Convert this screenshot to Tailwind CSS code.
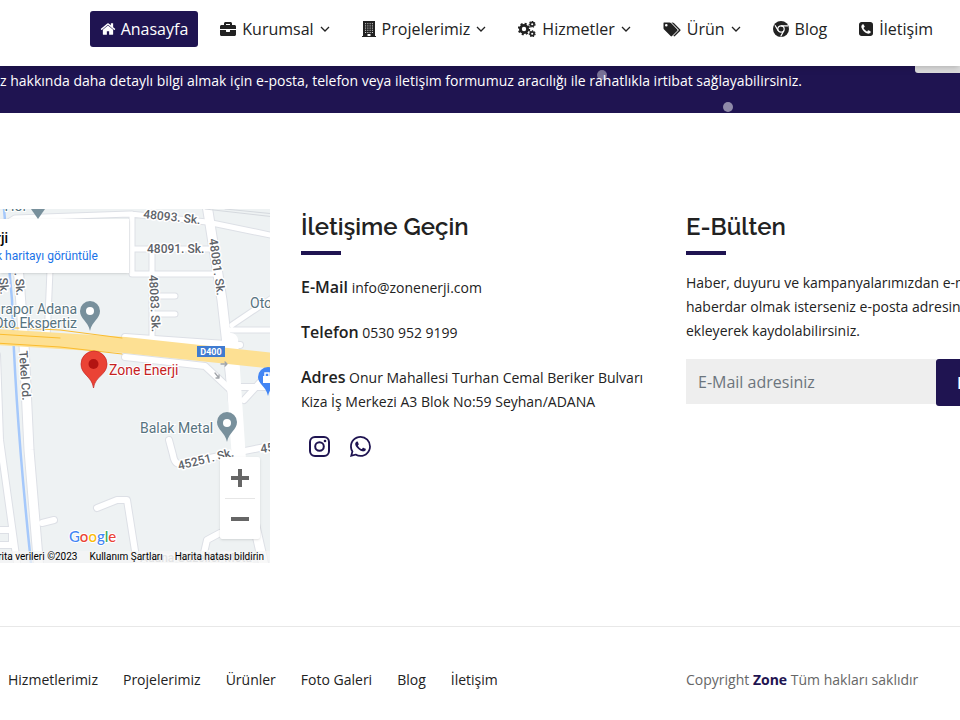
<!DOCTYPE html>
<html lang="tr">
<head>
    <meta charset="UTF-8">
    <meta name="viewport" content="width=device-width, initial-scale=1.0">
    <title>İletişim - Zone Enerji</title>
    <script src="https://cdn.jsdelivr.net/npm/@tailwindcss/browser@4"></script>
</head>
<body class="overflow-x-hidden bg-white font-['Open_Sans',sans-serif] text-[14px] leading-6 text-[#222]">

    <!-- Header -->
    <header class="relative z-20 flex h-[66px] justify-end bg-white pr-[17px] pt-[11px] shadow-md">
        <nav class="flex items-start gap-3 whitespace-nowrap text-[16px]">
            <a href="#" class="flex h-9 items-center gap-[5px] rounded-[3px] bg-[#1f1451] px-[10px] text-white">
                <svg class="h-4 w-4" viewBox="0 0 1792 1792" fill="currentColor"><path d="M1472 992v480q0 26-19 45t-45 19h-384v-384h-256v384h-384q-26 0-45-19t-19-45v-480q0-1 .5-3t.5-3l575-474 575 474q1 2 1 6zm223-69l-62 74q-8 9-21 11h-3q-13 0-21-7l-692-577-692 577q-12 8-24 7-13-2-21-11l-62-74q-8-10-7-23.5t11-21.5l719-599q32-26 76-26t76 26l244 204v-195q0-14 9-23t23-9h192q14 0 23 9t9 23v408l219 182q10 8 11 21.5t-7 23.5z"/></svg>
                Anasayfa
            </a>
            <a href="#" class="flex h-9 items-center gap-[6px] px-[10px]">
                <svg class="h-4 w-4" viewBox="0 0 512 512" fill="currentColor"><path d="M320 336c0 8.84-7.16 16-16 16h-96c-8.84 0-16-7.16-16-16v-48H0v144c0 25.6 22.4 48 48 48h416c25.6 0 48-22.4 48-48V288H320v48zm144-208h-80V80c0-25.6-22.4-48-48-48H176c-25.6 0-48 22.4-48 48v48H48c-25.6 0-48 22.4-48 48v80h512v-80c0-25.6-22.4-48-48-48zm-144 0H192V96h128v32z"/></svg>
                Kurumsal
                <svg class="h-[10px] w-[10px]" viewBox="0 0 10 10" fill="none" stroke="currentColor" stroke-width="1.3"><path d="M1 3l4 4 4-4"/></svg>
            </a>
            <a href="#" class="flex h-9 items-center gap-[6px] px-[10px]">
                <svg class="h-4 w-[14px]" viewBox="0 0 14 16"><path d="M1 0h12v15h1v1H0v-1h1z" fill="currentColor"/><path d="M3 2.7h8M3 4.9h8M3 7.1h8M3 9.3h8M3 11.500h8" stroke="#fff" stroke-width=".8" stroke-dasharray="1.1 1.2"/><path d="M5.500 13h3v2h-3z" fill="#fff"/></svg>
                Projelerimiz
                <svg class="h-[10px] w-[10px]" viewBox="0 0 10 10" fill="none" stroke="currentColor" stroke-width="1.3"><path d="M1 3l4 4 4-4"/></svg>
            </a>
            <a href="#" class="flex h-9 items-center gap-[6px] px-[10px]">
                <svg class="h-4 w-[18px]" viewBox="0 0 18 16" fill="none" stroke="currentColor">
                    <circle cx="6" cy="8" r="3.600" stroke-width="2.800"/><circle cx="6" cy="8" r="5.200" stroke-width="2" stroke-dasharray="2.04 2.04"/>
                    <circle cx="14.200" cy="3.300" r="1.900" stroke-width="1.700"/><circle cx="14.200" cy="3.300" r="2.900" stroke-width="1.200" stroke-dasharray="1.3 1.3"/>
                    <circle cx="14.200" cy="12.700" r="1.900" stroke-width="1.700"/><circle cx="14.200" cy="12.700" r="2.900" stroke-width="1.200" stroke-dasharray="1.3 1.3"/>
                </svg>
                Hizmetler
                <svg class="h-[10px] w-[10px]" viewBox="0 0 10 10" fill="none" stroke="currentColor" stroke-width="1.3"><path d="M1 3l4 4 4-4"/></svg>
            </a>
            <a href="#" class="flex h-9 items-center gap-[6px] px-[10px]">
                <svg class="h-[15px] w-[18px]" viewBox="0 0 18 15" fill="currentColor"><path fill-rule="evenodd" d="M1 .5h5.500q.9 0 1.500.6l6.300 6.300q.7.7 0 1.400L9 14.100q-.7.7-1.400 0L1.100 7.600Q.5 7 .5 6V1Q.5.5 1 .5zM3.300 2a1.300 1.300 0 1 0 0 2.600 1.300 1.300 0 0 0 0-2.600z"/><path d="M8.500.5h.9q.9 0 1.500.6l6.400 6.300q.7.7 0 1.400L12 14.100q-.7.7-1.400 0l-.3-.4 5.200-5.200q.6-.5 0-1.100z"/></svg>
                Ürün
                <svg class="h-[10px] w-[10px]" viewBox="0 0 10 10" fill="none" stroke="currentColor" stroke-width="1.3"><path d="M1 3l4 4 4-4"/></svg>
            </a>
            <a href="#" class="flex h-9 items-center gap-[6px] px-[10px]">
                <svg class="h-4 w-4" viewBox="0 0 16 16"><circle cx="8" cy="8" r="8" fill="currentColor"/><g fill="none" stroke="#fff" stroke-width="1.200"><circle cx="8" cy="8" r="3.200"/><path d="M8 4.800h7M5.200 9.600L2 4.200M10.800 9.600L7.700 15.500"/></g></svg>
                Blog
            </a>
            <a href="#" class="flex h-9 items-center gap-[6px] px-[10px]">
                <svg class="h-[14px] w-[14px]" viewBox="0 128 1536 1536" fill="currentColor"><path d="M1280 1193q0-11-2-16-3-8-38.5-29.5t-88.5-49.5l-53-29q-5-3-19-13t-25-15-21-5q-18 0-47 32.5t-57 65.5-44 33q-7 0-16.5-3.5t-15.5-6.5-17-9.5-14-8.5q-99-55-170.5-126.5t-126.5-170.5q-2-3-8.5-14t-9.5-17-6.5-15.5-3.5-16.5q0-13 20.5-33.5t45-38.5 45-39.5 20.5-36.5q0-10-5-21t-15-25-13-19q-3-6-15-28.5t-25-45.5-26.5-47.5-25-40.5-16.5-18-16-2q-48 0-101 22-46 21-80 94.5t-34 130.5q0 16 2.5 34t5 30.5 9 33 10 29.5 12.5 33 11 30q60 164 216.5 320.5t320.5 216.5q6 2 30 11t33 12.5 29.5 10 33 9 30.5 5 34 2.5q57 0 130.5-34t94.5-80q22-53 22-101zm256-777v960q0 119-84.5 203.5t-203.5 84.5h-960q-119 0-203.5-84.5t-84.5-203.5v-960q0-119 84.5-203.5t203.5-84.5h960q119 0 203.5 84.5t84.5 203.5z"/></svg>
                İletişim
            </a>
        </nav>
    </header>

    <!-- Call to action -->
    <section class="relative h-[47px] overflow-hidden bg-[#1f1451] text-white">
        <p class="whitespace-nowrap pt-[3px]">z hakkında daha detaylı bilgi almak için e-posta, telefon veya iletişim formumuz aracılığı ile rahatlıkla irtibat sağlayabilirsiniz.</p>
        <span class="absolute left-[597px] top-[4px] h-[10px] w-[10px] rounded-full bg-white/40"></span>
        <span class="absolute left-[723px] top-[36px] h-[10px] w-[10px] rounded-full bg-white/50"></span>
        <span class="absolute left-[915px] right-0 top-0 h-[7px] rounded-bl-[3px] bg-[#dcdcdc]"></span>
    </section>

    <!-- Footer -->
    <footer class="overflow-x-clip">
        <div class="grid grid-cols-[271px_355px_minmax(0,1fr)] gap-x-[30px] pb-[63px] pt-24">

            <!-- Map -->
            <div class="relative h-[354px] w-[270px] overflow-hidden bg-[#eef2f3] font-[Roboto,sans-serif]">
                <svg class="block h-full w-full" viewBox="0 209 270 354" role="img" aria-label="Harita">
                    <g fill="none" stroke-linejoin="round" stroke-linecap="round">
                        <path d="M4 209L12 300C14 370 19 450 31 563" stroke="#a5c8fb" stroke-width="2.5"/>
                        <g stroke="#dde0e6">
                            <path d="M-5 230L15 218L130 214L207 222L275 236M-5 335V300M50 270L47 340M132 214V274H216M132 249H214M152 249V345M152 296H175M152 314H175M232 325L275 296M275 330H225" stroke-width="7"/>
                            <path d="M-3 355L0 440L18 570M42 523L54 520M97 508L117 500H127L138 570M-5 530H12V545H-5M200 570L207 540L220 533M169 440L173 455Q175 467 184 463L275 445M125 337L240 345M125 357L205 366L236 395M244 400L275 366M236 387H275" stroke-width="8"/>
                            <path d="M24 345L29 450L39 570M207 205L222 300L240 460L265 570M18 265L24 345" stroke-width="11"/>
                        </g>
                        <g stroke="#fff">
                            <path d="M-5 230L15 218L130 214L207 222L275 236M50 270L47 340M-5 335V300M132 214V274H216M132 249H214M152 249V345M152 296H175M152 314H175M232 325L275 296M275 330H225" stroke-width="5"/>
                            <path d="M-3 355L0 440L18 570M42 523L54 520M97 508L117 500H127L138 570M-5 530H12V545H-5M200 570L207 540L220 533M169 440L173 455Q175 467 184 463L275 445M125 337L240 345M125 357L205 366L236 395M244 400L275 366M236 387H275" stroke-width="6"/>
                            <path d="M24 345L29 450L39 570M207 205L222 300L240 460L265 570M18 265L24 345" stroke-width="9"/>
                            <path d="M231 340L239 460" stroke-width="14"/>
                        </g>
                        <path d="M205 209L275 217M225 209L275 214" stroke="#d5d9de" stroke-width="1"/>
                        <path d="M-5 337L125 345L275 361" stroke="#fde093" stroke-width="16" stroke-linecap="butt"/>
                        <path d="M-5 327L60 330L122 338M-5 343L60 347L122 354M-5 334L60 338" stroke="#fbbc2e" stroke-width="1"/>
                        <path d="M221 364h6M225 362l2 2-2 2M215 373l4 5M219 375v3h-3" stroke="#a1a5aa" stroke-width="1.3"/>
                    </g>

                    <!-- Street names -->
                    <g fill="#5d6268" stroke="#fff" stroke-width="3" stroke-linejoin="round" paint-order="stroke" font-size="12" font-weight="500">
                        <text x="143" y="218" transform="rotate(6 143 218)">48093. Sk.</text>
                        <text x="147" y="253">48091. Sk.</text>
                        <text x="209" y="239" transform="rotate(82 209 239)">48081. Sk.</text>
                        <text x="149" y="275" transform="rotate(87 149 275)">48083. Sk.</text>
                        <text x="14" y="266" transform="rotate(85 14 266)">1. Sk.</text>
                        <text x="-1" y="278" transform="rotate(85 -1 278)">Sk.</text>
                        <text x="19" y="351" transform="rotate(86 19 351)">Tekel Cd.</text>
                        <text x="179" y="470" transform="rotate(-14 179 470)">45251. Sk.</text>
                        <text x="261" y="453" transform="rotate(-8 261 453)">45</text>
                        <text x="140" y="562" fill="#b4b8bc">Adana Güzeller Mota</text>
                    </g>

                    <!-- Places -->
                    <g fill="#577380" stroke="#fff" stroke-width="2" paint-order="stroke" font-size="14">
                        <text x="26" y="211" text-anchor="end">Hol</text>
                        <text x="77" y="314" text-anchor="end">rapor Adana</text>
                        <text x="77" y="328" text-anchor="end">Oto Ekspertiz</text>
                        <text x="250" y="308">Oto</text>
                        <text x="140" y="433">Balak Metal</text>
                        <text x="109" y="375" fill="#c5221f">Zone Enerji</text>
                    </g>
                    <g fill="#78909c">
                        <path d="M31 209h14l-7 10z"/>
                        <path d="M90 331C88 321 80 319 80 311a10 10 0 0 1 20 0C100 319 92 321 90 331z"/>
                        <path d="M227 442C225 432 217 430 217 422a10 10 0 0 1 20 0C237 430 229 432 227 442z"/>
                    </g>
                    <circle cx="90" cy="311" r="4" fill="#fff"/>
                    <circle cx="227" cy="423" r="4" fill="#fff"/>
                    <path d="M268 396C266 386 258 384 258 377a10 10 0 0 1 20 0C278 384 270 386 268 396z" fill="#4285f4"/>
                    <path d="M263 376h10v7h-10z" fill="#fff"/>
                    <path d="M265 376v-3h4v3" fill="none" stroke="#fff" stroke-width="1.5"/>
                    <path d="M93.500 388C92 376 81 375 81 364a13 13 0 0 1 26 0C107 375 95 376 93.500 388z" fill="#ea4335" stroke="#c5221f" stroke-width=".7"/>
                    <circle cx="93.500" cy="364" r="5" fill="#b31412"/>
                    <path d="M197 346h28v11h-28z" fill="#3f7bd0"/>
                    <text x="211" y="355" fill="#fff" font-size="9" font-weight="700" text-anchor="middle">D400</text>
                    <text x="69" y="542" font-family="Lato, sans-serif" font-size="15" font-weight="500" stroke="#fff" stroke-width="2" paint-order="stroke"><tspan fill="#4285f4">G</tspan><tspan fill="#ea4335">o</tspan><tspan fill="#fbbc05">o</tspan><tspan fill="#4285f4">g</tspan><tspan fill="#34a853">l</tspan><tspan fill="#ea4335">e</tspan></text>
                </svg>

                <div class="absolute left-0 top-[10px] flex h-[54px] w-[129px] flex-col items-start whitespace-nowrap bg-white pt-[10px] leading-[18px] shadow">
                    <div class="-ml-1 flex flex-col">
                        <strong class="text-[14px] font-medium text-black">rji</strong>
                        <a href="#" class="text-[12px] text-[#1a73e8]">k haritayı görüntüle</a>
                    </div>
                </div>

                <div class="absolute right-[10px] top-[248px] flex h-[82px] w-10 flex-col items-center rounded-[2px] bg-white shadow">
                    <button type="button" aria-label="Yakınlaştır" class="flex h-[41px] items-center justify-center"><svg class="h-[18px] w-[18px]" viewBox="0 0 18 18" fill="#666"><path d="M7 0h4v7h7v4h-7v7H7v-7H0V7h7z"/></svg></button>
                    <div class="h-px w-[30px] bg-[#e6e6e6]"></div>
                    <button type="button" aria-label="Uzaklaştır" class="flex h-10 items-center justify-center"><svg class="h-[18px] w-[18px]" viewBox="0 0 18 18" fill="#666"><path d="M0 7h18v4H0z"/></svg></button>
                </div>

                <div class="absolute bottom-0 right-0 flex h-3 items-center gap-3 whitespace-nowrap bg-[#f5f5f5]/70 pr-[6px] text-[10px] leading-3 text-black">
                    <span>Harita verileri ©2023</span>
                    <a href="#">Kullanım Şartları</a>
                    <a href="#">Harita hatası bildirin</a>
                </div>
            </div>

            <!-- Contact -->
            <div>
                <h4 class="pt-1 font-[Raleway,sans-serif] text-[24px] font-semibold leading-7">İletişime Geçin</h4>
                <div class="mt-[10px] h-1 w-10 bg-[#1f1451]"></div>
                <p class="mt-5 h-6"><strong class="text-[16px] font-semibold">E-Mail</strong> info@zonenerji.com</p>
                <p class="mt-[21px] h-6"><strong class="text-[16px] font-semibold">Telefon</strong> 0530 952 9199</p>
                <p class="mt-[21px]"><strong class="text-[16px] font-semibold">Adres</strong> Onur Mahallesi Turhan Cemal Beriker Bulvarı Kiza İş Merkezi A3 Blok No:59 Seyhan/ADANA</p>
                <div class="mt-[22px] flex gap-5 pl-2 text-[#1f1451]">
                    <a href="#" aria-label="Instagram"><svg class="h-[21px] w-[21px]" viewBox="0 0 21 21" fill="none" stroke="currentColor" stroke-width="2"><rect x="1" y="1" width="19" height="19" rx="5"/><circle cx="10.500" cy="10.500" r="4.300"/><circle cx="16" cy="5" r="1.300" fill="currentColor" stroke="none"/></svg></a>
                    <a href="#" aria-label="WhatsApp"><svg class="h-[21px] w-[21px]" viewBox="0 0 16 16" fill="currentColor"><path d="M13.601 2.326A7.854 7.854 0 0 0 7.994 0C3.627 0 .068 3.558.064 7.926c0 1.399.366 2.76 1.057 3.965L0 16l4.204-1.102a7.933 7.933 0 0 0 3.79.965h.004c4.368 0 7.926-3.558 7.93-7.93A7.898 7.898 0 0 0 13.6 2.326zM7.994 14.521a6.573 6.573 0 0 1-3.356-.92l-.24-.144-2.494.654.666-2.433-.156-.251a6.56 6.56 0 0 1-1.007-3.505c0-3.626 2.957-6.584 6.591-6.584a6.56 6.56 0 0 1 4.66 1.931 6.557 6.557 0 0 1 1.928 4.66c-.004 3.639-2.961 6.592-6.592 6.592zm3.615-4.934c-.197-.099-1.17-.578-1.353-.646-.182-.065-.315-.099-.445.099-.133.197-.513.646-.627.775-.114.133-.232.148-.43.05-.197-.1-.836-.308-1.592-.985-.59-.525-.985-1.175-1.103-1.372-.114-.198-.011-.304.088-.403.087-.088.197-.232.296-.346.1-.114.133-.198.198-.33.065-.134.034-.248-.015-.347-.05-.099-.445-1.076-.612-1.47-.16-.389-.323-.335-.445-.34-.114-.007-.247-.007-.38-.007a.729.729 0 0 0-.529.247c-.182.198-.691.677-.691 1.654 0 .977.71 1.916.81 2.049.098.133 1.394 2.132 3.383 2.992.47.205.84.326 1.129.418.475.152.904.129 1.246.08.38-.058 1.171-.48 1.338-.943.164-.464.164-.86.114-.943-.049-.084-.182-.133-.38-.232z"/></svg></a>
                </div>
            </div>

            <!-- Newsletter -->
            <div>
                <h4 class="pt-1 font-[Raleway,sans-serif] text-[24px] font-semibold leading-7">E-Bülten</h4>
                <div class="mt-[10px] h-1 w-10 bg-[#1f1451]"></div>
                <p class="mt-4 whitespace-nowrap">Haber, duyuru ve kampanyalarımızdan e-mail ile<br>haberdar olmak isterseniz e-posta adresinizi<br>ekleyerek kaydolabilirsiniz.</p>
                <form class="mt-4 flex items-start">
                    <input type="email" aria-label="E-Mail adresiniz" placeholder="E-Mail adresiniz" class="h-[45px] w-[250px] shrink-0 bg-[#eee] px-3 text-[16px] placeholder:text-[#6c757d]">
                    <button type="button" class="h-[47px] shrink-0 rounded-[3px] bg-[#1f1451] px-[21px] text-[16px] font-semibold text-white">Kaydol</button>
                </form>
            </div>
        </div>

        <div class="grid grid-cols-[656px_minmax(0,1fr)] gap-x-[30px] border-t border-[#e8e8e8] pb-7 pt-[41px]">
            <nav class="flex gap-[25px] pl-2">
                <a href="#">Hizmetlerimiz</a>
                <a href="#">Projelerimiz</a>
                <a href="#">Ürünler</a>
                <a href="#">Foto Galeri</a>
                <a href="#">Blog</a>
                <a href="#">İletişim</a>
            </nav>
            <p class="whitespace-nowrap text-[#666]">Copyright <strong class="text-[#1f1451]">Zone</strong> Tüm hakları saklıdır</p>
        </div>
    </footer>

</body>
</html>
